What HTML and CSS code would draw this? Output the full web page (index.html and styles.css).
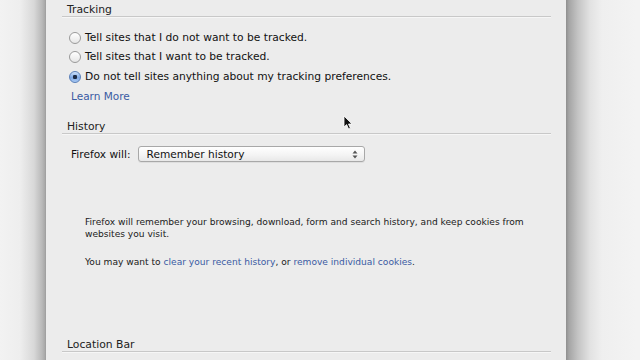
FILE: index.html
```html
<!DOCTYPE html>
<html>
<head>
<meta charset="utf-8">
<link rel="stylesheet" href="styles.css">
</head>
<body>
<div class="stage">
  <div class="side side-left"></div>
  <div class="window">
    <section class="group group-tracking">
      <h2 class="heading">Tracking</h2>
      <div class="radios">
        <label class="radio-row"><span class="radio"></span><span class="label">Tell sites that I do not want to be tracked.</span></label>
        <label class="radio-row"><span class="radio"></span><span class="label">Tell sites that I want to be tracked.</span></label>
        <label class="radio-row"><span class="radio radio-on"></span><span class="label">Do not tell sites anything about my tracking preferences.</span></label>
      </div>
      <a class="learn-more">Learn More</a>
    </section>
    <section class="group group-history">
      <h2 class="heading">History</h2>
      <div class="will-row">
        <span class="will-label">Firefox will:</span>
        <span class="select"><span class="select-text">Remember history</span>
          <svg class="select-arrows" width="6" height="9" viewBox="0 0 6 9"><path d="M0.5 3.5 L3 0.5 L5.5 3.5 Z M0.5 5.5 L3 8.5 L5.5 5.5 Z" fill="#555"/></svg>
        </span>
      </div>
      <p class="para para-first">Firefox will remember your browsing, download, form and search history, and keep cookies from websites you visit.</p>
      <p class="para para-second">You may want to <a class="link">clear your recent history</a>, or <a class="link">remove individual cookies</a>.</p>
    </section>
    <section class="group group-location">
      <h2 class="heading">Location Bar</h2>
    </section>
  </div>
  <div class="side side-right"></div>
  <svg class="cursor" width="11" height="15" viewBox="0 0 11 15"><path d="M1 1 L1 12 L3.6 9.6 L5.6 14 L7.4 13.2 L5.5 9 L9 9 Z" fill="#111" stroke="#fff" stroke-width="0.8"/></svg>
</div>
</body>
</html>
```
FILE: styles.css
```css
html, body {
  margin: 0;
  padding: 0;
  width: 640px;
  height: 360px;
  overflow: hidden;
}
body {
  background: #f1f1f1;
  font-family: "DejaVu Sans", "Liberation Sans", sans-serif;
  color: #1e1e1e;
}
.stage {
  position: relative;
  display: flex;
  width: 640px;
  height: 360px;
}
.side-left {
  width: 46px;
  background: linear-gradient(to right, #f2f2f2 0px, #eeeeee 20px, #d8d8d8 34px, #b9b9b9 42px, #a8a8a8 45px, #9a9a9a 46px);
}
.side-right {
  flex: 1;
  background: linear-gradient(to right, #8f8f8f 0px, #a5a5a5 3px, #c4c4c4 12px, #e2e2e2 24px, #efefef 36px, #f3f3f3 70px);
}
.window {
  width: 520px;
  background: #ececec;
  display: flex;
  flex-direction: column;
}
.group {
  margin: 0 15px 0 16px;
}
.heading {
  margin: 0;
  padding: 2px 0 0 5px;
  font-size: 10.8px;
  font-weight: normal;
  line-height: 12px;
  color: #222;
  border-bottom: 1px solid #c8c8c8;
  box-shadow: 0 1px 0 #f6f6f6;
}
.group-tracking .heading {
  margin-top: 2px;
}
.radios {
  margin-top: 11px;
  display: flex;
  flex-direction: column;
}
.radio-row {
  display: flex;
  align-items: center;
  height: 19.5px;
  padding-left: 7px;
}
.radio {
  box-sizing: border-box;
  width: 12px;
  height: 12px;
  border-radius: 50%;
  border: 1px solid #9a9a9a;
  background: linear-gradient(#ffffff, #e6e6e6);
  margin-right: 4px;
  position: relative;
  flex: none;
}
.radio-on {
  border-color: #5a7fb8;
  background: radial-gradient(circle at 50% 50%, #1d2b45 0, #1d2b45 2px, transparent 2.4px), linear-gradient(#cfe2fb, #7fa9e6 55%, #a9c9f3);
}
.label {
  font-size: 10.7px;
  line-height: 14px;
  color: #111;
}
.learn-more {
  display: block;
  height: 19.5px;
  line-height: 19.5px;
  padding-left: 9px;
  font-size: 10.5px;
  color: #3a5ba3;
}
.group-history .heading {
  margin-top: 13px;
}
.will-row {
  margin-top: 12px;
  display: flex;
  align-items: center;
  height: 16px;
  padding-left: 9px;
}
.will-label {
  font-size: 10.6px;
  color: #111;
  margin-right: 7px;
}
.select {
  box-sizing: border-box;
  width: 227px;
  height: 16px;
  border: 1px solid #a8a8a8;
  border-radius: 3px;
  background: linear-gradient(#ffffff, #f3f3f3 60%, #e8e8e8);
  display: flex;
  align-items: center;
  justify-content: space-between;
  padding: 0 6px 0 8px;
  box-shadow: 0 1px 0 rgba(0,0,0,0.06);
}
.select-text {
  font-size: 10.6px;
  color: #111;
}
.para {
  margin: 0;
  padding-left: 23px;
  font-size: 9.1px;
  line-height: 12px;
  color: #1a1a1a;
  width: 460px;
}
.para-first {
  margin-top: 54px;
}
.para-second {
  margin-top: 16px;
}
.link {
  color: #3a5ba3;
}
.group-location .heading {
  margin-top: 69px;
}
.cursor {
  position: absolute;
  left: 343px;
  top: 115px;
}
```
